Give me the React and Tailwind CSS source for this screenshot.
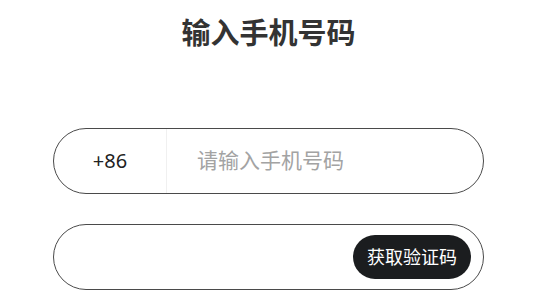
export default function App() {
  const font = { fontFamily: '"Noto Sans", "Noto Sans CJK SC", sans-serif' };
  return (
    <div className="w-[537px] h-[297px] bg-white" style={font}>
      <h1 className="pt-[13px] h-[40px] box-content text-center text-[29px] leading-[40px] font-bold text-[#333333]">
        输入手机号码
      </h1>
      <div className="mx-auto mt-[75px] w-[431px] flex flex-col gap-[30px]">
        <div className="h-[66px] rounded-full border border-[#4a4a4a] flex items-stretch overflow-hidden">
          <div className="w-[113px] flex items-center justify-center text-[20px] text-[#222222] border-r border-[#f0f0f0]">
            +86
          </div>
          <div className="flex-1 flex items-center pl-[30px] text-[21px] text-[#a3a3a3]">
            请输入手机号码
          </div>
        </div>
        <div className="h-[66px] rounded-full border border-[#4a4a4a] flex items-center justify-end pr-[12px]">
          <button className="w-[118px] h-[44px] rounded-full bg-[#1b1d1f] text-white text-[18px] flex items-center justify-center">
            获取验证码
          </button>
        </div>
      </div>
    </div>
  );
}
